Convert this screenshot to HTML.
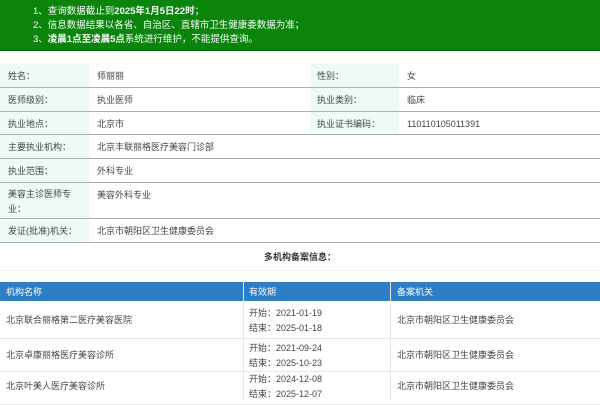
<!DOCTYPE html>
<html><head><meta charset="utf-8"><style>
*{margin:0;padding:0;box-sizing:border-box}
body{width:600px;height:400px;overflow:hidden;background:#fff;font-family:"Liberation Sans","Noto Sans CJK SC",sans-serif;font-size:9px;color:#444;position:relative}
.banner{position:absolute;left:0;top:0;width:600px;height:51px;background:#0a840a;border-bottom:1px solid #066406;color:#fff;font-size:9.5px}
.banner div{position:absolute;left:33px;line-height:12px}
.r{position:absolute;left:0;width:600px;border-bottom:1px solid #a9b3ad}
.l{position:absolute;top:0;bottom:0;background:#eff9f5}
.t{position:absolute;line-height:12px}
.hdr{position:absolute;left:0;top:282px;width:600px;height:19px;background:#2d7ec4;color:#fff}
.hdr span{position:absolute;top:4px;line-height:12px}
.vl{position:absolute;top:282px;width:1px;height:118px;background:#e6e6e6}
.row2{position:absolute;left:0;width:600px;border-bottom:1px solid #e8e8e8}
</style></head><body>
<div class="banner">
<div style="top:6px">1、查询数据截止到<b>2025年1月5日22时</b>；</div>
<div style="top:20px">2、信息数据结果以各省、自治区、直辖市卫生健康委数据为准；</div>
<div style="top:34px">3、<b>凌晨1点至凌晨5点</b>系统进行维护，不能提供查询。</div>
</div>

<div class="r" style="top:64px;height:24px"><div class="l" style="left:0;width:90px"></div><div class="l" style="left:310px;width:89px"></div>
<span class="t" style="left:8px;top:6px">姓名：</span><span class="t" style="left:97px;top:6px">师丽丽</span><span class="t" style="left:317px;top:6px">性别：</span><span class="t" style="left:407px;top:6px">女</span></div>
<div class="r" style="top:88px;height:24px"><div class="l" style="left:0;width:90px"></div><div class="l" style="left:310px;width:89px"></div>
<span class="t" style="left:8px;top:6px">医师级别：</span><span class="t" style="left:97px;top:6px">执业医师</span><span class="t" style="left:317px;top:6px">执业类别：</span><span class="t" style="left:407px;top:6px">临床</span></div>
<div class="r" style="top:112px;height:23px"><div class="l" style="left:0;width:90px"></div><div class="l" style="left:310px;width:89px"></div>
<span class="t" style="left:8px;top:6px">执业地点：</span><span class="t" style="left:97px;top:6px">北京市</span><span class="t" style="left:317px;top:6px">执业证书编码：</span><span class="t" style="left:407px;top:6px">110110105011391</span></div>
<div class="r" style="top:135px;height:24px"><div class="l" style="left:0;width:90px"></div>
<span class="t" style="left:8px;top:6px">主要执业机构：</span><span class="t" style="left:97px;top:6px">北京丰联丽格医疗美容门诊部</span></div>
<div class="r" style="top:159px;height:24px"><div class="l" style="left:0;width:90px"></div>
<span class="t" style="left:8px;top:6px">执业范围：</span><span class="t" style="left:97px;top:6px">外科专业</span></div>
<div class="r" style="top:183px;height:36px"><div class="l" style="left:0;width:90px"></div>
<span class="t" style="left:8px;top:4px;line-height:15px;width:70px">美容主诊医师专业：</span><span class="t" style="left:97px;top:6px">美容外科专业</span></div>
<div class="r" style="top:219px;height:24px"><div class="l" style="left:0;width:90px"></div>
<span class="t" style="left:8px;top:6px">发证(批准)机关：</span><span class="t" style="left:97px;top:6px">北京市朝阳区卫生健康委员会</span></div>

<div class="t" style="left:0;top:251px;width:600px;text-align:center;font-weight:bold;color:#333">多机构备案信息：</div>
<div class="t" style="left:0;top:270px;width:600px;border-bottom:1px solid #f0f0f0"></div>

<div class="hdr"><span style="left:6px">机构名称</span><span style="left:249px">有效期</span><span style="left:397px">备案机关</span></div>
<div class="vl" style="left:243px"></div><div class="vl" style="left:390px"></div>

<div class="row2" style="top:301px;height:38px"><span class="t" style="left:6px;top:13px">北京联合丽格第二医疗美容医院</span><span class="t" style="left:249px;top:5px;line-height:15px">开始：2021-01-19<br>结束：2025-01-18</span><span class="t" style="left:397px;top:13px">北京市朝阳区卫生健康委员会</span></div>
<div class="row2" style="top:339px;height:33px"><span class="t" style="left:6px;top:10px">北京卓康丽格医疗美容诊所</span><span class="t" style="left:249px;top:2px;line-height:15px">开始：2021-09-24<br>结束：2025-10-23</span><span class="t" style="left:397px;top:10px">北京市朝阳区卫生健康委员会</span></div>
<div class="row2" style="top:372px;height:33px"><span class="t" style="left:6px;top:8px">北京叶美人医疗美容诊所</span><span class="t" style="left:249px;top:0px;line-height:15px">开始：2024-12-08<br>结束：2025-12-07</span><span class="t" style="left:397px;top:8px">北京市朝阳区卫生健康委员会</span></div>
</body></html>
